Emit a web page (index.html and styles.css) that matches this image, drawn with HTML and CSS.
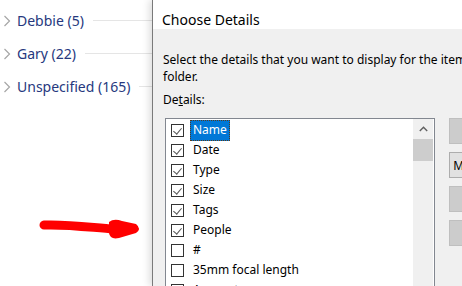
FILE: index.html
```html
<!DOCTYPE html>
<html lang="en">
<head>
  <meta charset="UTF-8" />
  <title>Choose Details</title>
  <link rel="stylesheet" href="styles.css">
</head>
<body>
  <div class="screen">
    <div class="groups">
      <div class="group">
        <svg class="chev" width="8" height="12" viewBox="0 0 8 12"><polyline points="1.5,1 6.5,6 1.5,11" fill="none" stroke="#a6a6a6" stroke-width="1.2"/></svg>
        <span class="group-name">Debbie (5)</span>
        <span class="group-line"></span>
      </div>
      <div class="group">
        <svg class="chev" width="8" height="12" viewBox="0 0 8 12"><polyline points="1.5,1 6.5,6 1.5,11" fill="none" stroke="#a6a6a6" stroke-width="1.2"/></svg>
        <span class="group-name">Gary (22)</span>
        <span class="group-line"></span>
      </div>
      <div class="group">
        <svg class="chev" width="8" height="12" viewBox="0 0 8 12"><polyline points="1.5,1 6.5,6 1.5,11" fill="none" stroke="#a6a6a6" stroke-width="1.2"/></svg>
        <span class="group-name">Unspecified (165)</span>
        <span class="group-line"></span>
      </div>
    </div>

    <div class="dialog">
      <div class="title-bar">Choose Details</div>
      <div class="dialog-body">
        <p class="intro">Select the details that you want to display for the items in this folder.</p>
        <p class="list-label">De<u>t</u>ails:</p>

        <div class="list-row">
          <div class="list-box">
            <ul class="items">
              <li class="item"><span class="box checked"></span><span class="label selected">Name</span></li>
              <li class="item"><span class="box checked"></span><span class="label">Date</span></li>
              <li class="item"><span class="box checked"></span><span class="label">Type</span></li>
              <li class="item"><span class="box checked"></span><span class="label">Size</span></li>
              <li class="item"><span class="box checked"></span><span class="label">Tags</span></li>
              <li class="item"><span class="box checked"></span><span class="label">People</span></li>
              <li class="item"><span class="box"></span><span class="label">#</span></li>
              <li class="item"><span class="box"></span><span class="label">35mm focal length</span></li>
              <li class="item"><span class="box"></span><span class="label">Account name</span></li>
            </ul>
            <div class="scrollbar">
              <div class="scroll-up">
                <svg width="9" height="6" viewBox="0 0 9 6"><polyline points="0.8,5 4.5,1.2 8.2,5" fill="none" stroke="#606060" stroke-width="1.4"/></svg>
              </div>
              <div class="scroll-thumb"></div>
            </div>
          </div>

          <div class="buttons">
            <button class="btn" disabled>Move Up</button>
            <button class="btn">Move Down</button>
            <button class="btn" disabled>Show</button>
            <button class="btn" disabled>Hide</button>
          </div>
        </div>
      </div>
    </div>

    <!-- hand drawn annotation -->
    <svg class="scribble" width="150" height="50" viewBox="0 200 150 50">
      <path d="M44 225 C 70 224, 95 228, 114 229" fill="none" stroke="#ff0000" stroke-width="9" stroke-linecap="round"/>
      <path d="M109 222 Q 114 218 122 221 L 136 224 Q 142 229 136 233 L 119 238 Q 110 240 109 233 Z" fill="#ff0000"/>
    </svg>
  </div>
</body>
</html>
```

FILE: styles.css
```css
* {
  box-sizing: border-box;
}

body {
  margin: 0;
  background: #ffffff;
  font-family: 'Segoe UI', 'Noto Sans', sans-serif;
}

.screen {
  position: relative;
  display: flex;
  width: 462px;
  height: 286px;
  overflow: hidden;
}

/* explorer groups behind the dialog */
.groups {
  width: 152px;
  flex-shrink: 0;
  padding-top: 4px;
}

.group {
  display: flex;
  align-items: center;
  height: 33px;
  padding-left: 3px;
}

.chev {
  flex-shrink: 0;
}

.group-name {
  margin-left: 6px;
  font-size: 14px;
  color: #26387e;
  white-space: nowrap;
}

.group-line {
  flex: 1;
  height: 1px;
  margin-left: 9px;
  background: #e5e5e5;
}

/* dialog */
.dialog {
  flex: 1;
  min-width: 0;
  display: flex;
  flex-direction: column;
  border-left: 1px solid #7a7a7a;
  background: #f0f0f0;
  box-shadow: -3px 0 7px rgba(0, 0, 0, 0.13);
  z-index: 1;
}

.title-bar {
  height: 37px;
  background: #ffffff;
  padding: 10px 0 0 9px;
  font-size: 14px;
  color: #000000;
  white-space: nowrap;
}

.dialog-body {
  flex: 1;
  padding: 22px 0 0 10px;
  font-size: 12px;
  color: #000000;
}

.intro {
  margin: 0;
  width: 372px;
  line-height: 17px;
}

.list-label {
  margin: 6px 0 0;
  line-height: 17px;
}

.list-row {
  display: flex;
  margin-top: 10px;
}

.list-box {
  display: flex;
  width: 270px;
  height: 190px;
  margin-left: 2px;
  background: #ffffff;
  border: 1px solid #828790;
  flex-shrink: 0;
}

.items {
  flex: 1;
  margin: 0;
  padding: 1px 0 0 5px;
  list-style: none;
}

.item {
  display: flex;
  align-items: center;
  height: 20px;
  white-space: nowrap;
}

.box {
  position: relative;
  width: 13px;
  height: 13px;
  border: 1px solid #333333;
  background: #ffffff;
  flex-shrink: 0;
  margin-top: 1px;
}

.box.checked::after {
  content: "";
  position: absolute;
  left: 3px;
  top: 1px;
  width: 4px;
  height: 7px;
  border-right: 1px solid #555555;
  border-bottom: 1px solid #555555;
  transform: rotate(40deg);
}

.label {
  margin-left: 6px;
  padding: 1px 2px 2px;
  line-height: 16px;
  border: 1px solid transparent;
}

.label.selected {
  background: #0078d7;
  color: #ffffff;
  border: 1px dotted #5a3a1a;
}

.scrollbar {
  width: 20px;
  margin-right: 1px;
  background: #f0f0f0;
}

.scroll-up {
  display: flex;
  align-items: center;
  justify-content: center;
  height: 20px;
}

.scroll-thumb {
  height: 22px;
  background: #cdcdcd;
}

.buttons {
  display: flex;
  flex-direction: column;
  gap: 8px;
  margin-left: 14px;
}

.btn {
  width: 75px;
  height: 26px;
  padding: 0;
  font-family: inherit;
  font-size: 12px;
  color: #000000;
  background: #e1e1e1;
  border: 1px solid #adadad;
  white-space: nowrap;
}

.btn:disabled {
  background: #cccccc;
  border-color: #bfbfbf;
  color: #838383;
}

.scribble {
  position: absolute;
  left: 0;
  top: 200px;
  z-index: 2;
}
```
